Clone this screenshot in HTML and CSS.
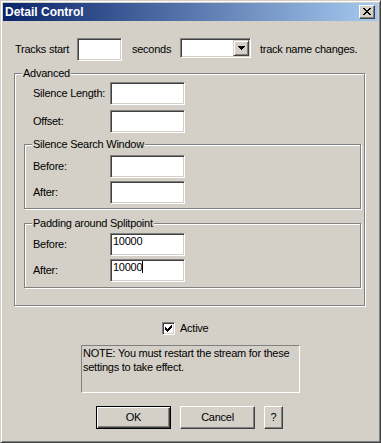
FILE: index.html
```html
<!DOCTYPE html>
<html>
<head>
	<title>Detail Control</title>
	<link rel="stylesheet" href="styles.css">
</head>
<body>
	<div class="win">
		<div class="caption">
			<span>Detail Control</span>
			<div class="btn close">
				<svg width="8" height="7" viewBox="0 0 8 7" shape-rendering="crispEdges"><path d="M0 0h2v1H0zM6 0h2v1H6zM1 1h2v1H1zM5 1h2v1H5zM2 2h4v1H2zM3 3h2v1H3zM2 4h4v1H2zM1 5h2v1H1zM5 5h2v1H5zM0 6h2v1H0zM6 6h2v1H6z"/></svg>
			</div>
		</div>
		<div class="client">
			<div class="row top">
				<span class="w-start">Tracks start</span>
				<div class="edit small"></div>
				<span class="w-secs">seconds</span>
				<div class="combo">
					<div class="dd">
						<svg width="7" height="4" viewBox="0 0 7 4" shape-rendering="crispEdges"><path d="M0 0h7v1H0zM1 1h5v1H1zM2 2h3v1H2zM3 3h1v1H3z"/></svg>
					</div>
				</div>
				<span class="w-track">track name changes.</span>
			</div>

			<div class="group adv">
				<span class="legend">Advanced</span>
				<div class="row field first">
					<span class="flbl">Silence Length:</span>
					<div class="edit"></div>
				</div>
				<div class="row field second">
					<span class="flbl">Offset:</span>
					<div class="edit"></div>
				</div>

				<div class="group sub silence">
					<span class="legend">Silence Search Window</span>
					<div class="row field first">
						<span class="flbl">Before:</span>
						<div class="edit"></div>
					</div>
					<div class="row field second">
						<span class="flbl">After:</span>
						<div class="edit"></div>
					</div>
				</div>

				<div class="group sub padding">
					<span class="legend">Padding around Splitpoint</span>
					<div class="row field first">
						<span class="flbl">Before:</span>
						<div class="edit">10000</div>
					</div>
					<div class="row field second">
						<span class="flbl">After:</span>
						<div class="edit">10000<span class="caret"></span></div>
					</div>
				</div>
			</div>

			<div class="row active">
				<div class="check">
					<svg width="7" height="7" viewBox="0 0 7 7" shape-rendering="crispEdges"><path d="M0 2h1v3H0zM1 3h1v3H1zM2 4h1v3H2zM3 3h1v3H3zM4 2h1v3H4zM5 1h1v3H5zM6 0h1v3H6z"/></svg>
				</div>
				<span>Active</span>
			</div>

			<div class="note">NOTE: You must restart the stream for these settings to take effect.</div>

			<div class="row buttons">
				<div class="btn push default">OK</div>
				<div class="btn push">Cancel</div>
				<div class="btn push help">?</div>
			</div>
		</div>
	</div>
</body>
</html>
```

FILE: styles.css
```css
body {
	margin: 0;
	background: #d4d0c8;
}

.win {
	width: 381px;
	height: 443px;
	box-sizing: border-box;
	padding: 2px;
	background: #d4d0c8;
	border: 1px solid;
	border-color: #d4d0c8 #404040 #404040 #d4d0c8;
	box-shadow: inset 1px 1px #fff, inset -1px -1px #808080;
	font: 11px "Liberation Sans", Arial, sans-serif;
	color: #000;
}

.caption {
	height: 18px;
	display: flex;
	align-items: center;
	justify-content: space-between;
	padding: 0 3px 0 2px;
	background: linear-gradient(to right, #0a246a, #a6caf0);
	color: #fff;
	font-weight: 700;
	font-size: 12px;
}

.btn {
	box-sizing: border-box;
	display: flex;
	align-items: center;
	justify-content: center;
	background: #d4d0c8;
	border: 1px solid;
	border-color: #fff #404040 #404040 #fff;
	box-shadow: inset -1px -1px #808080;
	color: #000;
}

.close {
	width: 16px;
	height: 14px;
	padding-bottom: 1px;
}

.client {
	padding: 17px 0 0 11px;
	letter-spacing: -0.25px;
}

.row {
	display: flex;
	align-items: center;
	line-height: 13px;
}

.top {
	margin-left: 1px;
	height: 23px;
}

.w-start { width: 62px; }
.w-secs { width: 48px; margin-left: 10px; }
.w-track { margin-left: 9px; }

.edit {
	box-sizing: border-box;
	width: 75px;
	height: 23px;
	padding: 1px 0 0 2px;
	align-self: flex-start;
	background: #fff;
	border: 1px solid;
	border-color: #808080 #fff #fff #808080;
	box-shadow: inset 1px 1px #404040, inset -1px -1px #d4d0c8;
	line-height: 13px;
}

.edit.small {
	width: 45px;
}

.caret {
	display: inline-block;
	width: 1px;
	height: 12px;
	background: #000;
	vertical-align: -2px;
}

.combo {
	box-sizing: border-box;
	width: 71px;
	height: 20px;
	padding: 1px;
	align-self: flex-start;
	display: flex;
	justify-content: flex-end;
	background: #fff;
	border: 1px solid;
	border-color: #808080 #fff #fff #808080;
	box-shadow: inset 1px 1px #404040, inset -1px -1px #d4d0c8;
}

.dd {
	box-sizing: border-box;
	width: 16px;
	height: 16px;
	display: flex;
	align-items: center;
	justify-content: center;
	background: #d4d0c8;
	border: 1px solid;
	border-color: #d4d0c8 #404040 #404040 #d4d0c8;
	box-shadow: inset 1px 1px #fff, inset -1px -1px #808080;
}

.group {
	box-sizing: border-box;
	border: 1px solid #808080;
	box-shadow: inset 1px 1px #fff, 1px 1px #fff;
}

.legend {
	display: table;
	margin: -7px 0 -6px 7px;
	padding: 0 1px;
	line-height: 13px;
	background: #d4d0c8;
}

.adv {
	width: 351px;
	height: 233px;
	margin-top: 12px;
}

.field {
	height: 23px;
	margin-left: 18px;
}

.flbl {
	width: 77px;
}

.adv > .first { margin-top: 8px; }
.adv > .second { margin-top: 5px; }

.sub {
	width: 337px;
	height: 65px;
	margin-left: 9px;
}

.sub .field { margin-left: 8px; }
.sub .second { margin-top: 3px; }

.silence { margin-top: 11px; }
.silence .first { margin-top: 10px; }

.padding { margin-top: 14px; }
.padding .first { margin-top: 9px; }

.active {
	margin: 16px 0 0 148px;
	height: 13px;
}

.check {
	box-sizing: border-box;
	width: 13px;
	height: 13px;
	margin-right: 5px;
	padding: 2px 0 0 2px;
	background: #fff;
	border: 1px solid;
	border-color: #808080 #fff #fff #808080;
	box-shadow: inset 1px 1px #404040, inset -1px -1px #d4d0c8;
}

.check svg {
	display: block;
}

.note {
	box-sizing: border-box;
	width: 219px;
	height: 48px;
	margin: 10px 0 0 67px;
	padding: 0 1px;
	line-height: 14px;
	border: 1px solid;
	border-color: #808080 #fff #fff #808080;
}

.buttons {
	margin: 13px 0 0 82px;
	gap: 9px;
}

.push {
	width: 75px;
	height: 23px;
	padding-bottom: 1px;
}

.default {
	border-color: #000;
	box-shadow: inset 1px 1px #fff, inset -1px -1px #404040, inset -2px -2px #808080;
}

.help {
	width: 19px;
}
```
